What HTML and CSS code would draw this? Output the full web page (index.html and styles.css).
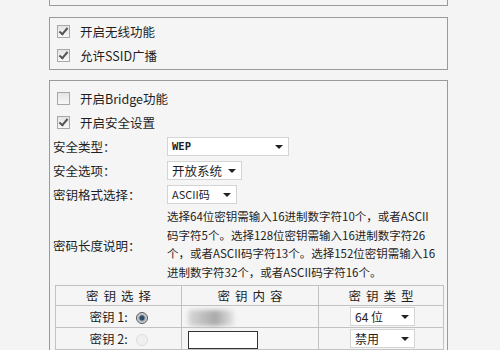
FILE: index.html
```html
<!DOCTYPE html>
<html>
<head>
	<meta charset="utf-8">
	<title>无线设置</title>
	<link rel="stylesheet" href="styles.css">
</head>
<body>
	<div class="page">
		<div class="box box-top"></div>

		<div class="box box-basic">
			<div class="check-row"><span class="cb on"></span>开启无线功能</div>
			<div class="check-row"><span class="cb on"></span>允许SSID广播</div>
		</div>

		<div class="box box-sec">
			<div class="check-row"><span class="cb"></span>开启Bridge功能</div>
			<div class="check-row"><span class="cb on"></span>开启安全设置</div>

			<div class="form">
				<div class="lbl">安全类型：</div>
				<div class="ctl"><span class="sel sel-wide">WEP<i class="arr"></i></span></div>

				<div class="lbl">安全选项：</div>
				<div class="ctl"><span class="sel sel-opt">开放系统<i class="arr"></i></span></div>

				<div class="lbl">密钥格式选择：</div>
				<div class="ctl"><span class="sel sel-fmt">ASCII码<i class="arr"></i></span></div>

				<div class="lbl">密码长度说明：</div>
				<div class="desc">选择64位密钥需输入16进制数字符10个，或者ASCII<br>码字符5个。选择128位密钥需输入16进制数字符26<br>个，或者ASCII码字符13个。选择152位密钥需输入16<br>进制数字符32个，或者ASCII码字符16个。</div>
			</div>

			<table class="keys">
				<tr>
					<th class="c1">密钥选择</th>
					<th class="c2">密钥内容</th>
					<th class="c3">密钥类型</th>
				</tr>
				<tr>
					<td>密钥 1: <span class="radio on"></span></td>
					<td class="left"><span class="key-blur"></span></td>
					<td class="left type"><span class="sel sel-type">64 位<i class="arr"></i></span></td>
				</tr>
				<tr>
					<td>密钥 2: <span class="radio"></span></td>
					<td class="left"><span class="key-input"></span></td>
					<td class="left type"><span class="sel sel-type">禁用<i class="arr"></i></span></td>
				</tr>
				<tr>
					<td></td>
					<td></td>
					<td></td>
				</tr>
			</table>
		</div>
	</div>
</body>
</html>
```

FILE: styles.css
```css
html, body {
	margin: 0;
	background: #f4f4f4;
}

body {
	font-family: "Noto Sans CJK SC", "Liberation Sans", sans-serif;
	font-size: 12px;
	color: #1e1e1e;
	overflow: hidden;
}

.page {
	display: flex;
	flex-direction: column;
	padding-left: 49px;
}

.box {
	width: 397px;
	border: 1px solid #9a9a9a;
	background: #f5f5f5;
}

.box-top {
	height: 5px;
	border-top: none;
	margin-bottom: 11px;
}

.box-basic {
	height: 51px;
	display: flex;
	flex-direction: column;
	justify-content: center;
	margin-bottom: 10px;
}

.box-sec {
	padding-top: 5px;
	padding-bottom: 20px;
}

.check-row {
	height: 24px;
	display: flex;
	align-items: center;
	padding-left: 7px;
	font-size: 12.5px;
}

.cb {
	width: 11px;
	height: 11px;
	border: 1px solid #a8a8a8;
	background: linear-gradient(#e4e4e4, #f8f8f8);
	margin-right: 10px;
	position: relative;
}

.cb.on::after {
	content: "";
	position: absolute;
	left: 3px;
	top: 0px;
	width: 3px;
	height: 7px;
	border: solid #555;
	border-width: 0 2px 2px 0;
	transform: rotate(40deg);
}

.form {
	display: grid;
	grid-template-columns: 114px 1fr;
	padding-left: 3px;
}

.lbl {
	height: 24px;
	display: flex;
	align-items: center;
	font-size: 12.5px;
}

.form .lbl:nth-last-child(2) {
	height: auto;
}

.ctl {
	height: 24px;
	display: flex;
	align-items: center;
}

.sel {
	display: inline-flex;
	align-items: center;
	height: 17px;
	border: 1px solid #d4d4d4;
	background: #fff;
	padding-left: 4px;
	font-size: 12px;
	position: relative;
}

.arr {
	position: absolute;
	right: 5px;
	top: 7px;
	width: 0;
	height: 0;
	border-left: 4px solid transparent;
	border-right: 4px solid transparent;
	border-top: 4px solid #222;
}

.sel-wide {
	width: 116px;
	font-size: 10.5px;
	font-family: "DejaVu Sans Mono", monospace;
	font-weight: bold;
}

.sel-opt {
	width: 69px;
	font-size: 12.5px;
}

.sel-fmt {
	width: 64px;
	font-size: 11px;
}

.desc {
	line-height: 18.5px;
	font-size: 11.5px;
	padding: 1px 0 4px;
	white-space: nowrap;
}

.keys {
	border-collapse: collapse;
	margin-left: 5px;
	width: 389px;
	table-layout: fixed;
}

.keys th, .keys td {
	border: 1px solid #c2c2c2;
	font-weight: normal;
	text-align: center;
	height: 21px;
	padding: 0;
	font-size: 12.5px;
}

.keys th {
	height: 19px;
	letter-spacing: 5px;
	text-indent: 5px;
}

.keys .c1 {
	width: 125px;
}

.keys .c2 {
	width: 136px;
}

.keys td.left {
	text-align: left;
	padding-left: 6px;
}

.keys td.type {
	padding-left: 31px;
}

.radio {
	display: inline-block;
	width: 10px;
	height: 10px;
	border-radius: 50%;
	border: 1px solid #ddd;
	background: #f0f0f0;
	vertical-align: -2px;
	margin-left: 5px;
}

.radio.on {
	border: 1px solid #555;
	background: radial-gradient(circle, #2e4a66 0 2px, #9aa6b2 3px, #e0e0e0 5px);
}

.key-blur {
	display: inline-block;
	width: 46px;
	height: 16px;
	vertical-align: middle;
	background: linear-gradient(90deg, #d8d8d8, #b9b9b9 40%, #a9a9a9 60%, #e6e6e6);
	filter: blur(2px);
	border-radius: 4px;
}

.key-input {
	display: inline-block;
	width: 68px;
	height: 16px;
	vertical-align: middle;
	background: #fff;
	border: 1px solid #333;
}

.sel-type {
	width: 59px;
}
```
